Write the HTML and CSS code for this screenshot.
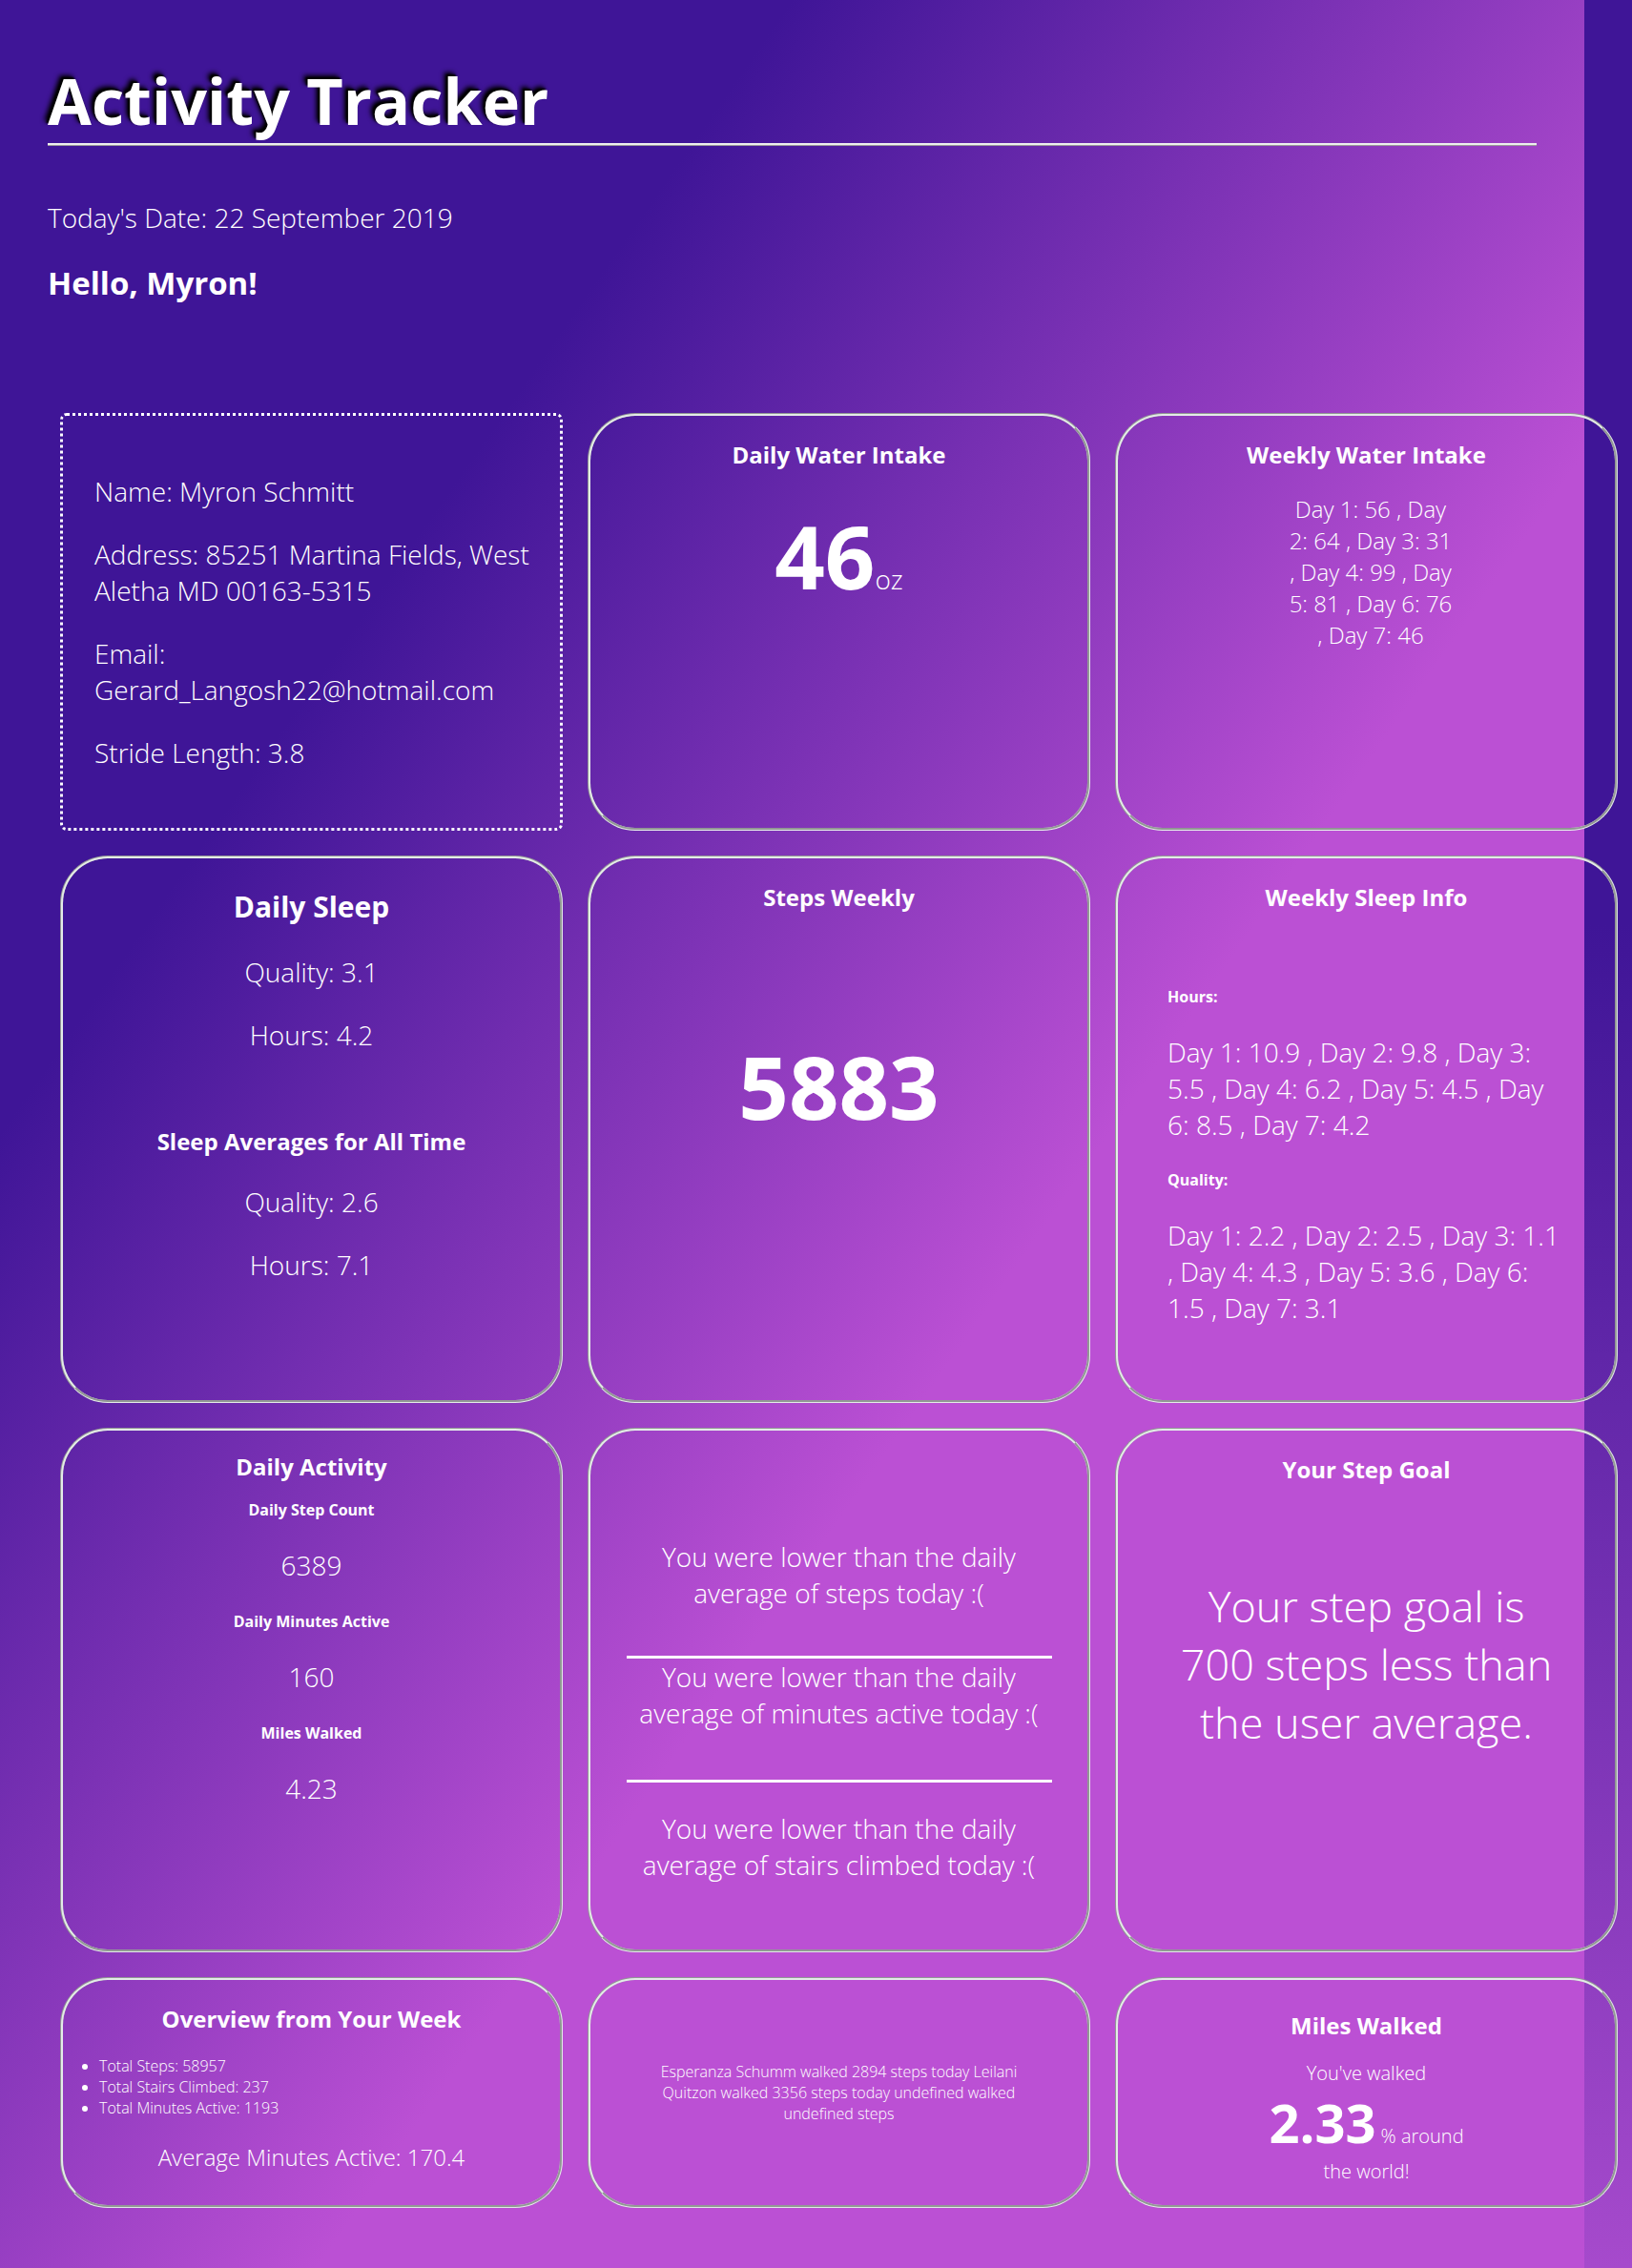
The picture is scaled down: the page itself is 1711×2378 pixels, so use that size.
FILE: index.html
```html
<!DOCTYPE html>
<html lang="en">
<head>
<meta charset="utf-8">
<title>Activity Tracker</title>
<link rel="stylesheet" href="styles.css">
</head>
<body>
<div class="page">
  <header class="header">
    <h1 class="title">Activity Tracker</h1>
    <p class="date">Today's Date: 22 September 2019</p>
    <h2 class="greeting">Hello, Myron!</h2>
  </header>

  <main class="grid">
    <section class="card card-user">
      <div class="user-info">
        <p>Name: Myron Schmitt</p>
        <p>Address: 85251 Martina Fields, West Aletha MD 00163-5315</p>
        <p>Email: Gerard_Langosh22@hotmail.com</p>
        <p>Stride Length: 3.8</p>
      </div>
    </section>

    <section class="card">
      <h3 class="card-title">Daily Water Intake</h3>
      <p class="big-num water-num">46<span class="unit">oz</span></p>
    </section>

    <section class="card">
      <h3 class="card-title">Weekly Water Intake</h3>
      <p class="water-week">Day 1: 56 , Day 2: 64 , Day 3: 31 , Day 4: 99 , Day 5: 81 , Day 6: 76 , Day 7: 46</p>
    </section>

    <section class="card">
      <h2 class="card-title-lg">Daily Sleep</h2>
      <p class="val">Quality: 3.1</p>
      <p class="val">Hours: 4.2</p>
      <h3 class="card-title sleep-avg-title">Sleep Averages for All Time</h3>
      <p class="val">Quality: 2.6</p>
      <p class="val">Hours: 7.1</p>
    </section>

    <section class="card">
      <h3 class="card-title">Steps Weekly</h3>
      <p class="big-num steps-num">5883</p>
    </section>

    <section class="card card-sleepweek">
      <h3 class="card-title">Weekly Sleep Info</h3>
      <h5 class="label label-first">Hours:</h5>
      <p class="days">Day 1: 10.9 , Day 2: 9.8 , Day 3: 5.5 , Day 4: 6.2 , Day 5: 4.5 , Day 6: 8.5 , Day 7: 4.2</p>
      <h5 class="label">Quality:</h5>
      <p class="days">Day 1: 2.2 , Day 2: 2.5 , Day 3: 1.1 , Day 4: 4.3 , Day 5: 3.6 , Day 6: 1.5 , Day 7: 3.1</p>
    </section>

    <section class="card">
      <h3 class="card-title activity-title">Daily Activity</h3>
      <h5 class="label-sm label-sm-first">Daily Step Count</h5>
      <p class="val">6389</p>
      <h5 class="label-sm">Daily Minutes Active</h5>
      <p class="val">160</p>
      <h5 class="label-sm">Miles Walked</h5>
      <p class="val">4.23</p>
    </section>

    <section class="card">
      <div class="cmp">
        <p class="cmp-text cmp-first">You were lower than the daily average of steps today :(</p>
        <div class="cmp-line cmp-line-1"></div>
        <p class="cmp-text cmp-second">You were lower than the daily average of minutes active today :(</p>
        <div class="cmp-line cmp-line-2"></div>
        <p class="cmp-text cmp-third">You were lower than the daily average of stairs climbed today :(</p>
      </div>
    </section>

    <section class="card">
      <h3 class="card-title">Your Step Goal</h3>
      <p class="goal">Your step goal is 700 steps less than the user average.</p>
    </section>

    <section class="card">
      <h3 class="card-title">Overview from Your Week</h3>
      <ul class="overview-list">
        <li>Total Steps: 58957</li>
        <li>Total Stairs Climbed: 237</li>
        <li>Total Minutes Active: 1193</li>
      </ul>
      <p class="avg">Average Minutes Active: 170.4</p>
    </section>

    <section class="card card-friends">
      <p class="friends">Esperanza Schumm walked 2894 steps today Leilani Quitzon walked 3356 steps today undefined walked undefined steps</p>
    </section>

    <section class="card">
      <h3 class="card-title miles-title">Miles Walked</h3>
      <p class="miles">You've walked <span class="miles-num">2.33</span> % around the world!</p>
    </section>
  </main>
</div>
</body>
</html>
```

FILE: styles.css
```css
* {
  box-sizing: border-box;
}

html,
body {
  margin: 0;
  padding: 0;
}

body {
  font-family: "Open Sans", "Noto Sans", sans-serif;
  font-weight: 300;
  color: #ffffff;
  min-height: 2378px;
  background: linear-gradient(to bottom, #3f1597 0, #3f1597 970px, #a64acc 2378px);
}

.page {
  width: 1661px;
  min-height: 2378px;
  padding: 60px 50px 0;
  background: linear-gradient(to bottom right, #3f1597 25%, #bb50d4 60%);
}

/* Header */
.title {
  margin: 0;
  font-size: 66.5px;
  font-weight: 700;
  line-height: normal;
  text-shadow: -4px -4px 5px #000000, -2px -2px 2px #000000;
  border-bottom: 2px solid #eeeeee;
  box-shadow: 0 1px 0 #9a9a9a;
}

.date {
  margin: 57px 0 0;
  font-size: 28px;
  line-height: normal;
}

.greeting {
  margin: 27px 0 0;
  font-size: 33px;
  font-weight: 700;
  line-height: normal;
}

/* Grid */
.grid {
  display: grid;
  width: 1634px;
  margin: 114px 0 0 13px;
  grid-template-columns: repeat(3, 527px);
  grid-template-rows: 438px 574px 550px 242px;
  column-gap: 26px;
  row-gap: 26px;
}

.card {
  border: 3px groove #e4ebe8;
  border-radius: 50px;
  text-align: center;
  line-height: normal;
}

.card p,
.card h2,
.card h3,
.card h5,
.card ul {
  line-height: normal;
}

.card-user {
  display: flex;
  flex-direction: column;
  justify-content: center;
  border: 3px dotted #ffffff;
  border-radius: 7px;
  text-align: left;
  padding: 0 20px 0 33px;
}

.user-info p {
  margin: 28px 0;
  font-size: 28px;
}

.card-title {
  margin: 24px 0 0;
  font-size: 24px;
  font-weight: 700;
}

.card-title-lg {
  margin: 30px 0 0;
  font-size: 30px;
  font-weight: 700;
}

.big-num {
  margin: 0;
  font-size: 92px;
  font-weight: 700;
}

.card .big-num {
  line-height: 1;
}

.water-num {
  margin-top: 44px;
}

.steps-num {
  margin-top: 136px;
}

.unit {
  font-size: 28px;
  font-weight: 300;
}

.water-week {
  width: 176px;
  margin: 24px 0 0 177px;
  font-size: 24px;
}

.val {
  margin: 28px 0 0;
  font-size: 28px;
}

.card-title-lg + .val {
  margin-top: 29px;
}

.sleep-avg-title {
  margin-top: 76px;
}

/* Weekly sleep */
.card-sleepweek {
  text-align: left;
  padding: 0 52px;
}

.card-sleepweek .card-title {
  text-align: center;
}

.label {
  margin: 28px 0 0;
  font-size: 16px;
  font-weight: 700;
}

.label-first {
  margin-top: 77px;
}

.days {
  margin: 28px 0 0;
  font-size: 28px;
}

/* Daily activity */
.activity-title {
  margin-top: 21px;
}

.label-sm {
  margin: 29px 0 0;
  font-size: 16px;
  font-weight: 700;
}

.label-sm-first {
  margin-top: 18px;
}

/* Comparison */
.cmp {
  width: 446px;
  margin: 0 auto;
}

.cmp-text {
  margin: 0;
  font-size: 28px;
}

.cmp-first {
  margin-top: 113px;
}

.cmp-line {
  height: 3px;
  background: #ffffff;
}

.cmp-line-1 {
  margin-top: 47px;
}

.cmp-second {
  margin-top: 0;
}

.cmp-line-2 {
  margin-top: 51px;
}

.cmp-third {
  margin-top: 29px;
}

/* Step goal */
.goal {
  width: 405px;
  margin: 96px auto 0;
  font-size: 45px;
}

/* Overview */
.overview-list {
  margin: 22px 0 0;
  padding-left: 38px;
  text-align: left;
  font-size: 16px;
}

.avg {
  margin: 24px 0 0;
  font-size: 24px;
}

/* Friends */
.card-friends {
  display: flex;
  align-items: center;
  justify-content: center;
}

.friends {
  width: 400px;
  margin: 0;
  font-size: 16px;
}

/* Miles */
.miles-title {
  margin-top: 31px;
}

.miles {
  width: 220px;
  margin: 20px auto 0;
  font-size: 20px;
}

.miles-num {
  font-size: 56px;
  font-weight: 700;
}
```
